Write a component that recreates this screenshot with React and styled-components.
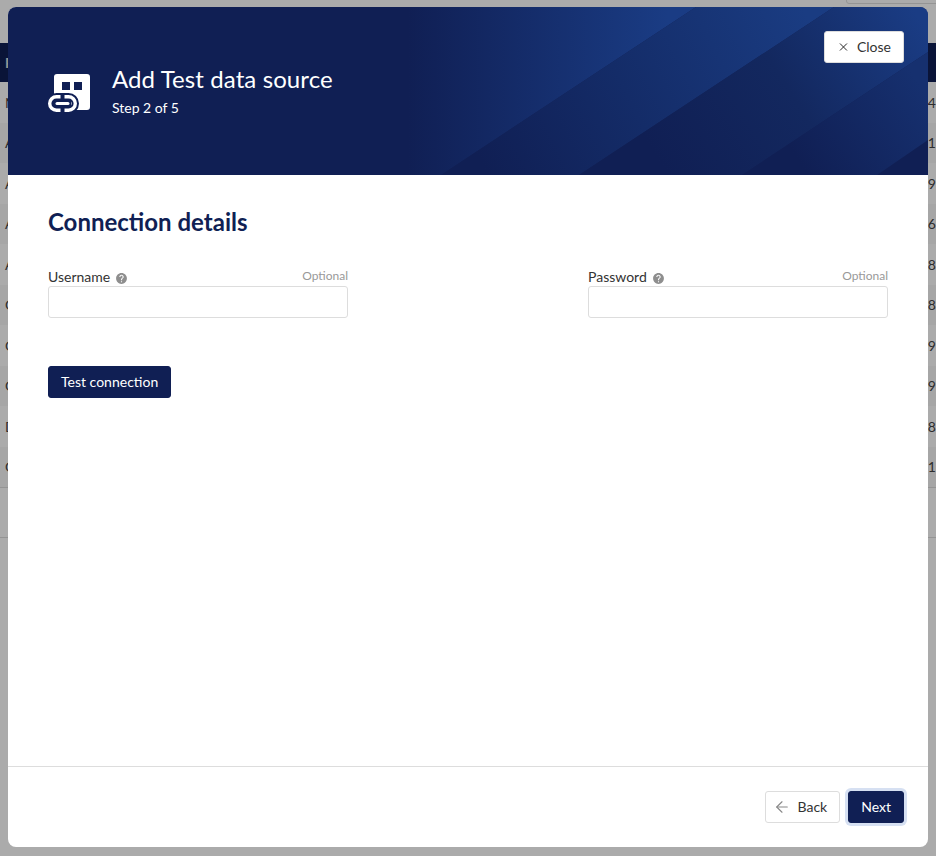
import React from 'react';
import styled, { createGlobalStyle } from 'styled-components';
import { X, ArrowLeft } from 'lucide-react';
import { MdHelp } from 'react-icons/md';

const GlobalStyle = createGlobalStyle`
    html, body {
        margin: 0;
        padding: 0;
        height: 100%;
        overflow: hidden;
        font-family: Lato, "Open Sans", sans-serif;
        background: #fff;
    }
    #root {
        height: 100%;
    }
`

const NAVY = '#101f54';

/* page behind the dialog */
const Page = styled.div`
    position: relative;
    height: 856px;
    padding-top: 43px;
    box-sizing: border-box;
    overflow: hidden;
    color: #444;
    font-size: 14px;
`

const TopButton = styled.div`
    position: absolute;
    top: -30px;
    right: -10px;
    width: 98px;
    height: 32px;
    border: 1px solid #ddd;
    border-radius: 3px;
`

const TableHead = styled.div`
    display: flex;
    align-items: center;
    justify-content: space-between;
    height: 39px;
    padding-left: 5px;
    background: ${NAVY};
    color: #ddd;
    font-weight: 700;
`

const Row = styled.div`
    display: flex;
    align-items: center;
    justify-content: space-between;
    height: 40.5px;
    padding-left: 5px;
    background: ${(p) => (p.$odd ? '#f8f8f8' : '#fff')};
`

const Pager = styled.div`
    height: 49px;
    border-top: 1px solid #ddd;
    border-bottom: 1px solid #ddd;
`

const Backdrop = styled.div`
    position: absolute;
    inset: 0;
    background: rgba(0, 0, 0, 0.33);
`

/* dialog */
const Modal = styled.div`
    position: absolute;
    left: 8px;
    top: 7px;
    width: 920px;
    height: 840px;
    display: flex;
    flex-direction: column;
    background: #fff;
    border-radius: 8px;
    overflow: hidden;
`

const Banner = styled.header`
    position: relative;
    flex: 0 0 168px;
    display: flex;
    align-items: center;
    gap: 22px;
    padding: 0 40px;
    box-sizing: border-box;
    background: ${NAVY};
    color: #fff;
`

const BannerArt = styled.svg`
    position: absolute;
    inset: 0;
    width: 100%;
    height: 100%;
`

const BannerIcon = styled.svg`
    position: relative;
    flex: none;
    width: 42px;
    height: 38px;
    margin-top: 3px;
`

const BannerText = styled.div`
    position: relative;
    display: flex;
    flex-direction: column;
    gap: 5px;
    margin-top: -1px;
`

const Title = styled.h1`
    margin: 0;
    font-size: 24px;
    line-height: 30px;
    font-weight: 400;
    letter-spacing: 0.1px;
`

const Step = styled.div`
    font-size: 14px;
    line-height: 18px;
`

const Button = styled.button`
    display: inline-flex;
    align-items: center;
    justify-content: center;
    height: 32px;
    padding: 0 12px 2px;
    box-sizing: border-box;
    font-family: inherit;
    font-size: 14px;
    border-radius: 3px;
    border: 1px solid ${(p) => (p.$primary ? NAVY : '#ddd')};
    background: ${(p) => (p.$primary ? NAVY : '#fff')};
    color: ${(p) => (p.$primary ? '#fff' : '#333')};
    box-shadow: ${(p) => (p.$focused ? '0 0 0 3px #d6e0f2' : 'none')};
`

const CloseButton = styled(Button)`
    position: absolute;
    top: 24px;
    right: 24px;
    width: 80px;
    justify-content: flex-end;
    gap: 7px;
`

const CloseIcon = styled(X)`
    position: relative;
    top: 1px;
    color: #222;
`

const BackButton = styled(Button)`
    gap: 7px;
`

const BackArrow = styled(ArrowLeft)`
    position: relative;
    top: 1px;
    margin-left: -5px;
    color: #888;
`

const Body = styled.main`
    flex: 1;
    padding: 32px 40px 0;
`

const Heading = styled.h2`
    margin: 0;
    font-size: 24px;
    line-height: 30px;
    font-weight: 700;
    color: ${NAVY};
`

const Fields = styled.div`
    display: grid;
    grid-template-columns: 300px 300px;
    justify-content: space-between;
    margin-top: 31px;
`

const Field = styled.div`
    display: flex;
    flex-direction: column;
`

const LabelRow = styled.div`
    display: flex;
    align-items: flex-start;
    height: 18px;
`

const Label = styled.label`
    font-size: 14px;
    line-height: 18px;
    color: #333;
`

const Help = styled(MdHelp)`
    margin: 4px 0 0 5px;
    font-size: 13px;
    color: #8e8e8e;
`

const Optional = styled.span`
    margin: 1px 0 0 auto;
    font-size: 12px;
    line-height: 14px;
    color: #999;
`

const Input = styled.input`
    height: 32px;
    padding: 0 8px;
    box-sizing: border-box;
    border: 1px solid #ddd;
    border-radius: 3px;
    background: #fff;
`

const TestRow = styled.div`
    margin-top: 48px;
`

const Footer = styled.footer`
    flex: 0 0 81px;
    display: flex;
    align-items: flex-start;
    justify-content: flex-end;
    gap: 8px;
    padding: 24px 24px 0;
    box-sizing: border-box;
    border-top: 1px solid #ddd;
`

const rows = [
    ['N', '14'], ['A', '21'], ['A', '19'], ['A', '26'], ['A', '18'],
    ['C', '28'], ['C', '19'], ['C', '29'], ['D', '18'], ['C', '21'],
];

const LEFT_LINK = 'M12.5 22.7H8.5a6.8 6.8 0 0 0 0 13.6h4';
const RIGHT_LINK = 'M16.5 22.7h4a6.8 6.8 0 0 1 0 13.6h-4';

const ConnectorIcon = () => (
    <BannerIcon viewBox="0 0 42 38">
        <path
            fill="#fff"
            fillRule="evenodd"
            d="M9 0h30a3 3 0 0 1 3 3v30a3 3 0 0 1-3 3H9a3 3 0 0 1-3-3V3a3 3 0 0 1 3-3zM14 8v8h8V8zM26 8v8h8V8z"
        />
        {/* dark halo that cuts the link out of the building */}
        <g fill="none" stroke={NAVY} strokeWidth="7.4">
            <path d={LEFT_LINK} />
            <path d={RIGHT_LINK} />
            <path d="M12 22.7h5M12 36.3h5M6 29.5h17" />
        </g>
        <g fill="none" stroke="#fff" strokeWidth="3.4">
            <path d={LEFT_LINK} />
            <path d={RIGHT_LINK} />
            <path d="M9 29.5h11" strokeLinecap="round" strokeWidth="3" />
        </g>
    </BannerIcon>
);

const Stripes = () => (
    <BannerArt viewBox="0 0 920 168" preserveAspectRatio="none">
        <defs>
            <linearGradient id="band1" gradientUnits="userSpaceOnUse" x1="400" y1="0" x2="660" y2="0">
                <stop offset="0" stopColor="#101f54" />
                <stop offset="1" stopColor="#1a3c84" />
            </linearGradient>
            <linearGradient id="band2" gradientUnits="userSpaceOnUse" x1="480" y1="168" x2="800" y2="10">
                <stop offset="0" stopColor="#101f54" />
                <stop offset="0.45" stopColor="#142c68" />
                <stop offset="1" stopColor="#1a3c82" />
            </linearGradient>
            <linearGradient id="band3" gradientUnits="userSpaceOnUse" x1="660" y1="168" x2="910" y2="10">
                <stop offset="0" stopColor="#101f54" />
                <stop offset="0.5" stopColor="#13285f" />
                <stop offset="1" stopColor="#1a3c84" />
            </linearGradient>
            <linearGradient id="band4" gradientUnits="userSpaceOnUse" x1="800" y1="168" x2="920" y2="90">
                <stop offset="0" stopColor="#101f54" />
                <stop offset="1" stopColor="#16306f" />
            </linearGradient>
        </defs>
        <path fill="url(#band1)" d="M400 0H688L433 168H400z" />
        <path fill="url(#band2)" d="M688 0H826L571 168H433z" />
        <path fill="url(#band3)" d="M826 0H920V45L734 168H571z" />
        <path fill="url(#band4)" d="M920 45V133L869 168H734z" />
    </BannerArt>
);

const App = () => (
    <Page>
        <GlobalStyle />
        <TopButton />
        <TableHead>
            <span>F</span>
        </TableHead>
        {rows.map(([name, value], idx) => (
            <Row key={idx} $odd={idx % 2 === 1}>
                <span>{name}</span>
                <span>{value}</span>
            </Row>
        ))}
        <Pager />
        <Backdrop />
        <Modal>
            <Banner>
                <Stripes />
                <ConnectorIcon />
                <BannerText>
                    <Title>Add Test data source</Title>
                    <Step>Step 2 of 5</Step>
                </BannerText>
                <CloseButton>
                    <CloseIcon size={20} strokeWidth={1.8} />
                    Close
                </CloseButton>
            </Banner>
            <Body>
                <Heading>Connection details</Heading>
                <Fields>
                    <Field>
                        <LabelRow>
                            <Label>Username</Label>
                            <Help />
                            <Optional>Optional</Optional>
                        </LabelRow>
                        <Input />
                    </Field>
                    <Field>
                        <LabelRow>
                            <Label>Password</Label>
                            <Help />
                            <Optional>Optional</Optional>
                        </LabelRow>
                        <Input />
                    </Field>
                </Fields>
                <TestRow>
                    <Button $primary>Test connection</Button>
                </TestRow>
            </Body>
            <Footer>
                <BackButton>
                    <BackArrow size={18} strokeWidth={1.5} />
                    Back
                </BackButton>
                <Button $primary $focused>Next</Button>
            </Footer>
        </Modal>
    </Page>
);

export default App;
